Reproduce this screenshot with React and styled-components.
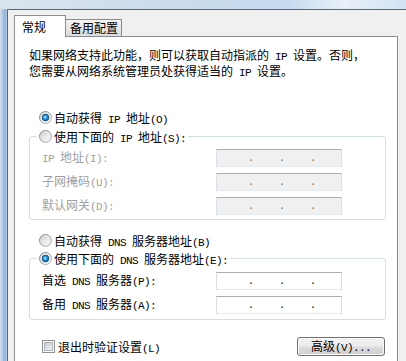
import React from "react";
import styled, { createGlobalStyle } from "styled-components";

const GlobalStyle = createGlobalStyle`
  html, body {
    margin: 0;
    padding: 0;
  }
  body {
    width: 406px;
    height: 361px;
    overflow: hidden;
    background: #f0f0f0;
    font-family: "Noto Sans CJK SC", "Noto Sans", sans-serif;
    font-size: 12px;
    color: #000;
  }
`;

const Screen = styled.div`
  display: flex;
  flex-direction: column;
  width: 406px;
  height: 361px;
  overflow: hidden;
`;

const Glass = styled.div`
  height: 9px;
  flex-shrink: 0;
  background: linear-gradient(to right, #dae4ee 0%, #cddcec 40%, #c6d9ef 70%, #e9f1f9 85%, #d3e3f4 100%);
`;

const Frame = styled.div`
  flex: 1;
  display: flex;
  min-height: 0;
`;

const SideGlass = styled.div`
  width: 7px;
  flex-shrink: 0;
  background: linear-gradient(to right, #d3e0ee 0%, #a9c4e3 45%, #8fb0d8 75%, #c4d6ea 100%);
`;

const Dialog = styled.div`
  flex: 1;
  min-width: 0;
  display: flex;
  flex-direction: column;
  border-top: 1px solid #60656b;
  border-left: 1px solid #60656b;
  background: #f0f0f0;
  padding: 5px 8px 0 6px;
`;

const Tabs = styled.div`
  display: flex;
  align-items: flex-end;
  height: 22px;
  margin-bottom: -1px;
  position: relative;
  z-index: 1;
`;

const Tab = styled.div`
  box-sizing: border-box;
  width: ${(p) => (p.$active ? "52px" : "57px")};
  height: ${(p) => (p.$active ? "22px" : "17px")};
  margin-bottom: ${(p) => (p.$active ? "0" : "1px")};
  margin-left: ${(p) => (p.$active ? "0" : "-1px")};
  position: relative;
  z-index: ${(p) => (p.$active ? 2 : 1)};
  border: 1px solid #898c95;
  border-bottom: 0;
  background: ${(p) => (p.$active ? "#fff" : "linear-gradient(#f4f4f4, #e6e6e6 55%, #dcdcdc)")};
  padding: ${(p) => (p.$active ? "4px 0 0 7px" : "1px 0 0 4px")};
  line-height: 14px;
  white-space: nowrap;
`;

const Panel = styled.div`
  flex: 1;
  border: 1px solid #898c95;
  border-bottom: 0;
  background: #fff;
  padding: 11px 11px 0 14px;
  display: flex;
  flex-direction: column;
`;

const Desc = styled.div`
  line-height: 13px;
  white-space: nowrap;
`;

const Lat = styled.span`
  font-family: "Liberation Mono", monospace;
  font-size: 11px;
  letter-spacing: -0.6px;
`;

const OptionRow = styled.label`
  display: flex;
  align-items: center;
  gap: 2px;
  height: 16px;
  margin-left: ${(p) => p.$indent || 0}px;
  margin-top: ${(p) => p.$top || 0}px;
  white-space: nowrap;
  color: ${(p) => (p.$disabled ? "#a0a0a0" : "#000")};
  svg {
    flex-shrink: 0;
  }
`;

const Group = styled.fieldset`
  margin: ${(p) => p.$top || 0}px 0 0 0;
  padding: ${(p) => p.$pad}px 0 ${(p) => p.$pad - 1}px 0;
  border: 1px solid #d5dfe5;
  border-radius: 3px;
  min-width: 0;
`;

const Legend = styled.legend`
  margin-left: 7px;
  padding: 0 2px;
`;

const Rows = styled.div`
  display: grid;
  grid-template-columns: 174px 126px;
  grid-auto-rows: 18px;
  row-gap: 6px;
  padding-left: 12px;
  align-items: center;
`;

const FieldLabel = styled.div`
  white-space: nowrap;
  line-height: 18px;
  color: ${(p) => (p.$disabled ? "#a0a0a0" : "#000")};
`;

const IpBox = styled.div`
  box-sizing: border-box;
  width: 126px;
  height: 18px;
  border: 1px solid #dbdfe6;
  border-top-color: #abadb3;
  border-bottom-color: #e3e9ef;
  background: ${(p) => (p.$disabled ? "#f0f0f0" : "#fff")};
  display: flex;
  align-items: flex-end;
  padding: 0 0 2px 31px;
  gap: 25px;
  color: ${(p) => (p.$disabled ? "#6d6d6d" : "#000")};
`;

const Dot = styled.span`
  font-family: "Liberation Mono", monospace;
  font-size: 10px;
  line-height: 10px;
  width: 6px;
`;

const Footer = styled.div`
  display: flex;
  align-items: center;
  justify-content: space-between;
  margin-top: 17px;
  padding-right: 1px;
`;

const CheckRow = styled.label`
  display: flex;
  align-items: center;
  gap: 3px;
  margin-left: 13px;
  white-space: nowrap;
`;

const Button = styled.button`
  box-sizing: border-box;
  width: 88px;
  height: 19px;
  padding: 0;
  border: 1px solid #707070;
  border-radius: 3px;
  background: linear-gradient(#f2f2f2 0%, #ebebeb 48%, #dddddd 52%, #cfcfcf 100%);
  box-shadow: inset 0 0 0 1px #fbfbfb;
  font-family: "Noto Sans CJK SC", sans-serif;
  font-size: 12px;
  line-height: 16px;
  color: #000;
`;

function Txt({ s }) {
  return s
    .split(/([\x20-\x7e]+)/)
    .filter(Boolean)
    .map((part, i) => (/^[\x20-\x7e]+$/.test(part) ? <Lat key={i}>{part}</Lat> : part));
}

function RadioIcon({ checked }) {
  return (
    <svg width="13" height="13" viewBox="0 0 13 13">
      <defs>
        <linearGradient id="rOuter" x1="0" y1="0" x2="1" y2="1">
          <stop offset="0" stopColor="#7f8283" />
          <stop offset="1" stopColor="#b8babb" />
        </linearGradient>
        <linearGradient id="rFill" x1="0" y1="0" x2="1" y2="1">
          <stop offset="0" stopColor="#cfd1d3" />
          <stop offset="1" stopColor="#fdfdfd" />
        </linearGradient>
        <radialGradient id="rDot" cx="0.45" cy="0.45" r="0.6">
          <stop offset="0" stopColor="#9ef0ff" />
          <stop offset="0.45" stopColor="#2a9be0" />
          <stop offset="1" stopColor="#0d3d7c" />
        </radialGradient>
      </defs>
      <circle cx="6.5" cy="6.5" r="6" fill="url(#rFill)" stroke="url(#rOuter)" />
      {checked ? (
        <>
          <circle cx="6.5" cy="6.5" r="4.6" fill="#f6f8fa" />
          <circle cx="6.5" cy="6.5" r="3.4" fill="url(#rDot)" stroke="#1c4f8a" strokeWidth="0.8" />
        </>
      ) : (
        <circle cx="6.5" cy="6.5" r="4.4" fill="url(#rFill)" stroke="#e4e5e6" strokeWidth="0.8" />
      )}
    </svg>
  );
}

function CheckIcon() {
  return (
    <svg width="13" height="13" viewBox="0 0 13 13">
      <defs>
        <linearGradient id="cFill" x1="0" y1="0" x2="1" y2="1">
          <stop offset="0" stopColor="#c6cad0" />
          <stop offset="1" stopColor="#f4f4f4" />
        </linearGradient>
      </defs>
      <rect x="0.5" y="0.5" width="12" height="12" fill="#fff" stroke="#8e8f8f" />
      <rect x="2.5" y="2.5" width="8" height="8" fill="url(#cFill)" stroke="#aeb2b8" />
    </svg>
  );
}

function IpField({ disabled }) {
  return (
    <IpBox $disabled={disabled}>
      <Dot>.</Dot>
      <Dot>.</Dot>
      <Dot>.</Dot>
    </IpBox>
  );
}

function Option({ checked, label, ...rest }) {
  return (
    <OptionRow {...rest}>
      <RadioIcon checked={checked} />
      <span>
        <Txt s={label} />
      </span>
    </OptionRow>
  );
}

const ipRows = ["IP 地址(I):", "子网掩码(U):", "默认网关(D):"];
const dnsRows = ["首选 DNS 服务器(P):", "备用 DNS 服务器(A):"];

export default function App() {
  return (
    <Screen>
      <GlobalStyle />
      <Glass />
      <Frame>
        <SideGlass />
        <Dialog>
          <Tabs>
            <Tab $active>常规</Tab>
            <Tab>备用配置</Tab>
          </Tabs>
          <Panel>
            <Desc>
              <Txt s="如果网络支持此功能，则可以获取自动指派的 IP 设置。否则，" />
            </Desc>
            <Desc>
              <Txt s="您需要从网络系统管理员处获得适当的 IP 设置。" />
            </Desc>

            <Option checked label="自动获得 IP 地址(O)" $indent={10} $top={29} />
            <Group $top={3} $pad={5}>
              <Legend>
                <Option label="使用下面的 IP 地址(S):" />
              </Legend>
              <Rows>
                {ipRows.map((r) => (
                  <React.Fragment key={r}>
                    <FieldLabel $disabled>
                      <Txt s={r} />
                    </FieldLabel>
                    <IpField disabled />
                  </React.Fragment>
                ))}
              </Rows>
            </Group>

            <Option label="自动获得 DNS 服务器地址(B)" $indent={10} $top={12} />
            <Group $top={2} $pad={6}>
              <Legend>
                <Option checked label="使用下面的 DNS 服务器地址(E):" />
              </Legend>
              <Rows>
                {dnsRows.map((r) => (
                  <React.Fragment key={r}>
                    <FieldLabel>
                      <Txt s={r} />
                    </FieldLabel>
                    <IpField />
                  </React.Fragment>
                ))}
              </Rows>
            </Group>

            <Footer>
              <CheckRow>
                <CheckIcon />
                <span>
                  <Txt s="退出时验证设置(L)" />
                </span>
              </CheckRow>
              <Button>
                <Txt s="高级(V)..." />
              </Button>
            </Footer>
          </Panel>
        </Dialog>
      </Frame>
    </Screen>
  );
}
